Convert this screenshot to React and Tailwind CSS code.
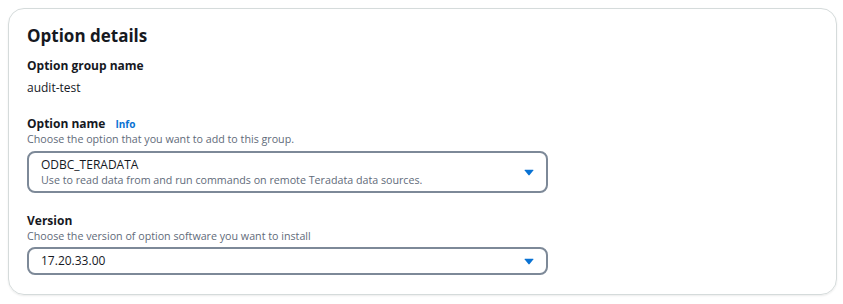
const Caret = () => (
  <svg width="10" height="7" viewBox="0 0 10 7" className="shrink-0">
    <path d="M1 0.8 H9 Q9.8 0.8 9.3 1.5 L5.6 6.1 Q5 6.8 4.4 6.1 L0.7 1.5 Q0.2 0.8 1 0.8 Z" fill="#0972d3" />
  </svg>
)

const Label = ({ children }) => (
  <div className="text-[12px] leading-[16px] font-bold text-[#16191f]">{children}</div>
)

const Hint = ({ children }) => (
  <div className="text-[10.7px] leading-[14px] text-[#5f6b7a]">{children}</div>
)

export default function App() {
  return (
    <div className="w-[843px] h-[304px] bg-white p-[8px] pr-[6px] pb-[9px]" style={{ fontFamily: '"Open Sans", "Noto Sans", sans-serif' }}>
      <div className="h-full border border-[#d5dbdb] rounded-[16px] shadow-[0_1px_2px_rgba(0,0,0,0.08)] pl-[18px] pt-[16px] flex flex-col">
        <h2 className="text-[17px] leading-[22px] font-bold text-[#16191f]">Option details</h2>

        <div className="mt-[11px]">
          <Label>Option group name</Label>
          <div className="mt-[6px] text-[12px] leading-[16px] text-[#16191f]">audit-test</div>
        </div>

        <div className="mt-[20px]">
          <div className="flex items-baseline gap-[10px]">
            <Label>Option name</Label>
            <span className="text-[10px] font-bold text-[#0972d3]">Info</span>
          </div>
          <Hint>Choose the option that you want to add to this group.</Hint>
          <div className="mt-[5px] w-[521px] border-2 border-[#7d8998] rounded-[8px] pl-[12px] pr-[12px] pt-[4px] pb-[4px] flex items-center justify-between">
            <div>
              <div className="text-[12px] leading-[16px] text-[#16191f]">ODBC_TERADATA</div>
              <Hint>Use to read data from and run commands on remote Teradata data sources.</Hint>
            </div>
            <Caret />
          </div>
        </div>

        <div className="mt-[20px]">
          <Label>Version</Label>
          <Hint>Choose the version of option software you want to install</Hint>
          <div className="mt-[4px] w-[521px] border-2 border-[#7d8998] rounded-[8px] pl-[12px] pr-[12px] pt-[4px] pb-[4px] flex items-center justify-between">
            <div className="text-[12px] leading-[16px] text-[#16191f]">17.20.33.00</div>
            <Caret />
          </div>
        </div>
      </div>
    </div>
  )
}
